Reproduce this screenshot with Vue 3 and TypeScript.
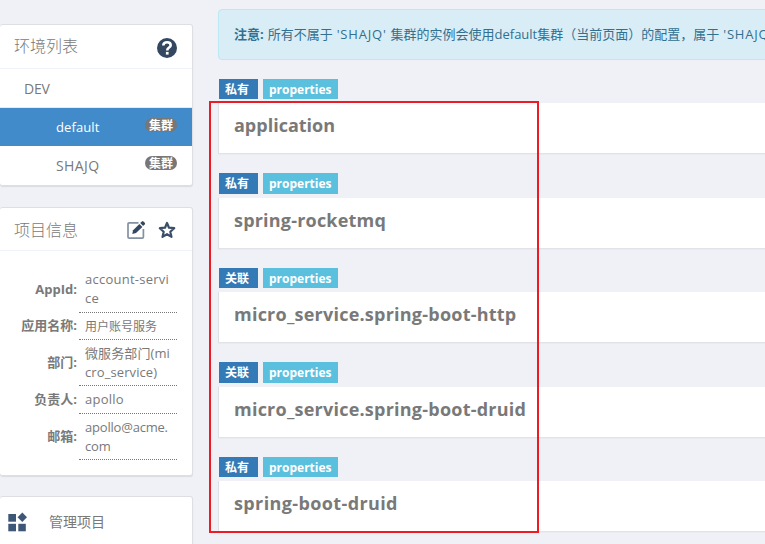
<script setup lang="ts">
interface Cluster { name: string; active: boolean }
interface Info { label: string; lines: string[]; height: number; cls?: string }
interface Namespace { kind: string; name: string; cls: string }

const clusters: Cluster[] = [
  { name: 'default', active: true },
  { name: 'SHAJQ', active: false },
]
const infos: Info[] = [
  { label: 'AppId:', lines: ['account-servi', 'ce'], height: 47, cls: 'wide' },
  { label: '应用名称:', lines: ['用户账号服务'], height: 27, cls: 'cjk' },
  { label: '部门:', lines: ['微服务部门(mi', 'cro_service)'], height: 46 },
  { label: '负责人:', lines: ['apollo'], height: 28, cls: 'wide' },
  { label: '邮箱:', lines: ['apollo@acme.', 'com'], height: 46, cls: 'narrow' },
]
const namespaces: Namespace[] = [
  { kind: '私有', name: 'application', cls: 'n1' },
  { kind: '私有', name: 'spring-rocketmq', cls: 'n2' },
  { kind: '关联', name: 'micro_service.spring-boot-http', cls: 'n3' },
  { kind: '关联', name: 'micro_service.spring-boot-druid', cls: 'n4' },
  { kind: '私有', name: 'spring-boot-druid', cls: 'n5' },
]
</script>

<template>
  <div class="page">
    <aside class="side">
      <section class="panel env">
        <header class="head">
          <span class="title">环境列表</span>
          <svg class="help" viewBox="0 0 20 20" width="20" height="20">
            <circle cx="10" cy="10" r="10" fill="#334760" />
            <path d="M6.3 7.6C6.3 5.2 7.9 4.2 10.1 4.2S13.7 5.4 13.7 7.2C13.7 9.7 10.2 9.3 10.2 12.4" fill="none" stroke="#fff" stroke-width="2.6" />
            <rect x="8.9" y="13.9" width="2.7" height="2.7" fill="#fff" />
          </svg>
        </header>
        <div class="row dev"><span class="dev-name">DEV</span></div>
        <div v-for="c in clusters" :key="c.name" class="row cluster" :class="{ active: c.active }">
          <span class="cname">{{ c.name }}</span>
          <span class="badge">集群</span>
        </div>
      </section>

      <section class="panel project">
        <header class="head">
          <span class="title">项目信息</span>
          <span class="tools">
            <svg viewBox="0 0 20 20" width="20" height="20">
              <path d="M12.5 2.8H3.2Q2 2.8 2 4V17Q2 18.2 3.2 18.2H16.2Q17.4 18.2 17.4 17V9" fill="none" stroke="#8391a3" stroke-width="1.7" />
              <path d="M6.3 13.9L7.1 10.2L13.4 3.9L16.4 6.9L10 13.1Z" fill="#334760" />
              <path d="M14.2 3.1L16 1.4Q16.7.8 17.4 1.4L18.8 2.8Q19.4 3.5 18.8 4.2L17.1 6Z" fill="#334760" />
            </svg>
            <svg viewBox="0 0 20 20" width="20" height="20">
              <path d="M10 3L12 7.7L17.2 8.2L13.3 11.7L14.5 16.9L10 14.2L5.5 16.9L6.7 11.7L2.8 8.2L8 7.7Z" fill="none" stroke="#3b4f6a" stroke-width="2.2" stroke-linejoin="round" />
            </svg>
          </span>
        </header>
        <div class="infos">
          <div v-for="i in infos" :key="i.label" class="info" :style="{ height: i.height + 'px' }">
            <span class="label">{{ i.label }}</span>
            <span class="value" :class="i.cls"><span v-for="l in i.lines" :key="l">{{ l }}</span></span>
          </div>
        </div>
      </section>

      <section class="panel manage">
        <svg viewBox="0 0 20 20" width="20" height="20" fill="#3f5777">
          <rect x="1.3" y="2" width="7.7" height="7.7" />
          <path d="M15.3 .6L20 5.3L15.3 10L10.6 5.3Z" />
          <rect x="1.3" y="11.8" width="7.7" height="7.5" />
          <rect x="11.3" y="11.8" width="7.5" height="7.5" />
        </svg>
        <span class="manage-text">管理项目</span>
      </section>
    </aside>

    <main class="main">
      <div class="alert"><b>注意:</b><span class="note">所有不属于 <span class="code">'SHAJQ'</span> 集群的实例会使用default集群（当前页面）的配置，属于 <span class="code">'SHAJQ'</span></span></div>
      <section v-for="n in namespaces" :key="n.name" class="ns">
        <div class="tags"><span class="tag kind">{{ n.kind }}</span><span class="tag format">properties</span></div>
        <div class="card"><span class="name" :class="n.cls">{{ n.name }}</span></div>
      </section>
    </main>
    <div class="marker"></div>
  </div>
</template>

<style>
body { background: #f0f1f7; overflow: hidden; }
</style>

<style scoped>
* { box-sizing: border-box; }
.page { position: relative; display: flex; width: 765px; height: 544px; overflow: hidden; background: #f0f1f7; color: #797979; font-family: "Open Sans", "Noto Sans CJK SC", sans-serif; font-size: 13px; white-space: nowrap; }
.side { flex: none; width: 193px; padding-top: 24px; }
.panel { background: #fff; border: 1px solid #dddfe3; border-left: 0; border-radius: 3px; box-shadow: 0 1px 1px #d9dbe0; }
.env { height: 162px; }
.head { display: flex; align-items: center; justify-content: space-between; height: 44px; padding: 0 15px 0 14px; border-bottom: 1px solid #eff2f7; }
.title { font-size: 16px; font-weight: 300; line-height: 22px; }
.env .title { margin-top: -1px; }
.help { margin-top: 3px; }
.row { display: flex; align-items: center; height: 38px; }
.dev { height: 39px; border-bottom: 1px solid #e7e9ee; padding-left: 24px; }
.dev-name { font-size: 14px; letter-spacing: -.2px; }
.cluster { justify-content: space-between; padding: 0 15px 0 56px; font-size: 14px; }
.cname { letter-spacing: .4px; }
.active { background: #428bca; color: #fff; }
.active .cname { font-weight: 500; font-size: 13px; letter-spacing: .1px; }
.badge { width: 32px; height: 14px; margin-top: -4px; border-radius: 7px; background: #777; color: #fff; font-size: 12px; font-weight: 700; line-height: 15px; text-align: center; }
.project { height: 269px; margin-top: 21px; }
.project .head { height: 43px; padding-top: 2px; }
.tools { display: flex; gap: 11px; }
.infos { padding-top: 15px; }
.info { display: flex; align-items: stretch; }
.label { width: 77px; align-self: center; margin-top: -4px; text-align: right; font-weight: 700; font-size: 13px; }
.info:first-child .label { margin-top: -2px; }
.value { display: flex; flex-direction: column; justify-content: center; width: 98px; margin-left: 2px; padding-left: 6px; border-bottom: 1px dotted #777; font-size: 13px; line-height: 19px; letter-spacing: .1px; }
.wide { letter-spacing: .25px; }
.narrow { letter-spacing: -.2px; }
.cjk { font-size: 12px; letter-spacing: 0; }
.manage { display: flex; height: 60px; margin-top: 20px; padding: 15px 0 0 7px; gap: 22px; align-items: flex-start; }
.manage-text { margin-top: 1px; font-size: 14px; line-height: 18px; }
.main { flex: 1; min-width: 0; padding: 9px 0 0 25px; }
.alert { display: flex; align-items: center; width: 620px; height: 51px; margin-bottom: 19px; padding: 0 0 2px 15px; border: 1px solid #bce8f1; border-radius: 4px; background: #d9edf7; color: #31708f; font-size: 13px; }
.alert b { margin-right: 4px; }
.code { margin: 0 .6px; letter-spacing: .8px; }
.ns { height: 94.45px; width: 620px; }
.tags { display: flex; gap: 5px; height: 24.3px; padding-left: 1px; }
.tag { height: 20.4px; padding-top: 1px; color: #fff; font-size: 12px; font-weight: 700; line-height: 20px; }
.kind { width: 39px; padding-left: 6px; background: #337ab7; }
.format { width: 75px; padding-left: 6px; background: #5bc0de; }
.card { display: flex; align-items: center; height: 51px; padding: 0 0 6px 15px; border-left: 1px solid #dddfe3; border-bottom: 1px solid #e1e3e8; background: #fff; box-shadow: 0 1px 0 #e9ebf0; }
.name { font-size: 18px; font-weight: 700; }
.n2 { letter-spacing: .2px; }
.n3, .n4 { letter-spacing: .23px; }
.n5 { letter-spacing: .38px; }
.marker { position: absolute; left: 209px; top: 101px; width: 330px; height: 432px; border: 2px solid #ed1c24; }
</style>
